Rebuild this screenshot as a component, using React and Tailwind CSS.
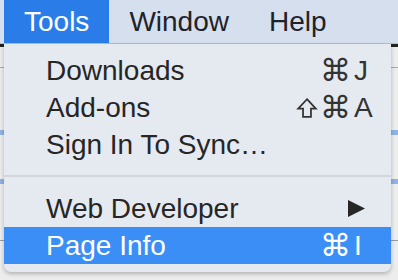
import React from 'react';

const items = [
  { label: 'Downloads', mods: '⌘', key: 'J' },
  { label: 'Add-ons', mods: '⌘', shift: true, key: 'A' },
  { label: 'Sign In To Sync…' },
];

function ShiftIcon({ className }) {
  return (
    <svg viewBox="0 0 20 20" className={className} fill="none" stroke="currentColor" strokeWidth="1.6" strokeLinejoin="miter">
      <path d="M10 2 L18 10.5 L13.6 10.5 L13.6 18 L6.4 18 L6.4 10.5 L2 10.5 Z" />
    </svg>
  );
}

function MenuRow({ label, mods, shift, keyName, active, submenu }) {
  return (
    <div className={`flex h-[37px] items-center pl-[42px] ${active ? 'bg-[#3b8ef5] text-white' : 'text-[#262626]'}`}>
      <span className="flex-1 whitespace-nowrap">{label}</span>
      {submenu ? (
        <svg viewBox="0 0 17 17" className="mr-[26px] h-[17px] w-[17px]">
          <polygon points="0,0 17,8.5 0,17" fill="#262626" />
        </svg>
      ) : (
        <div className={`flex items-center ${active ? 'text-white' : 'text-[#333]'}`}>
          <div className="flex w-[60px] items-center justify-end gap-[2px]">
            {shift && <ShiftIcon className="h-[22px] w-[22px]" />}
            {mods && <span className="font-['DejaVu_Sans',sans-serif] text-[31px] leading-none">{mods}</span>}
          </div>
          <span className="w-[40px] pl-[3px] text-left">{keyName}</span>
        </div>
      )}
    </div>
  );
}

export default function App() {
  return (
    <div className="relative h-[280px] w-[398px] overflow-hidden bg-[#ededed] font-['Liberation_Sans',Arial,sans-serif] text-[28px]">
      {/* menu bar */}
      <div className="flex h-[44px] items-center border-b border-[#b9bec7] bg-[#d5dfee] pl-[4px] text-[#1f2328]">
        <div className="flex h-full items-center bg-[#2a7de8] px-[20px] text-white">Tools</div>
        <div className="px-[20px]">Window</div>
        <div className="px-[20px]">Help</div>
      </div>

      {/* window content peeking out behind the menu */}
      <div className="h-[3px] bg-[#222]" />
      <div className="mt-[20px] h-[1px] bg-[#a9a9a9]" />
      <div className="mt-[62px] h-[5px] bg-[#8fb3e3]" />
      <div className="mt-[44px] h-[5px] bg-[#8fb3e3]" />
      <div className="mt-[56px] h-[1px] bg-[#9a9a9a]" />

      {/* dropdown */}
      <div className="absolute left-[4px] top-[44px] w-[387px] rounded-b-[7px] bg-[#e5e9f0] pb-[8px] pt-[8px] shadow-[0_2px_4px_rgba(0,0,0,0.25)]">
        {items.map((it) => (
          <MenuRow key={it.label} label={it.label} mods={it.mods} shift={it.shift} keyName={it.key} />
        ))}
        <div className="mb-[13px] mt-[12px] h-[2px] bg-[#d2d6dc]" />
        <MenuRow label="Web Developer" submenu />
        <MenuRow label="Page Info" mods="⌘" keyName="I" active />
      </div>
    </div>
  );
}
